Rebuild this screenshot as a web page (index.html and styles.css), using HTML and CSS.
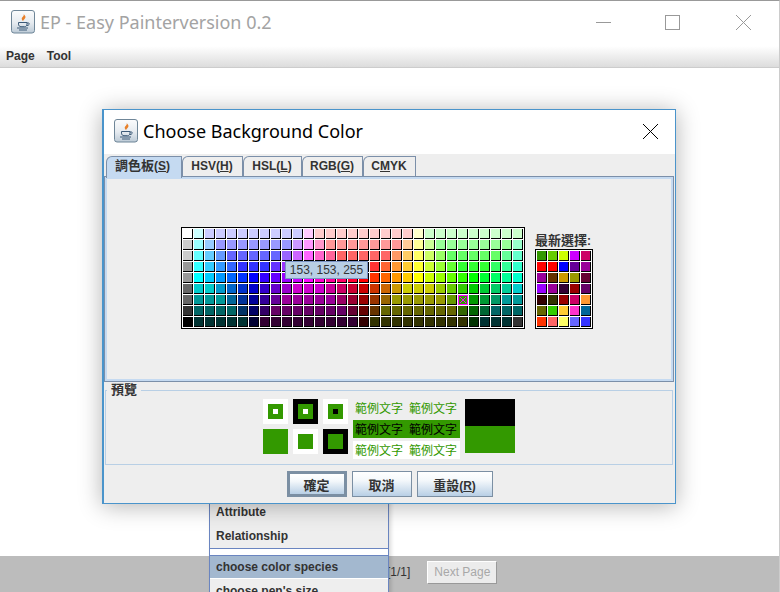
FILE: index.html
```html
<!DOCTYPE html>
<html lang="en">
<head>
    <meta charset="UTF-8">
    <title>EP - Easy Painter</title>
    <link rel="stylesheet" href="styles.css">
</head>
<body>
    <svg class="defs" width="0" height="0">
        <symbol id="javaIcon" viewBox="0 0 24 24">
            <defs>
                <linearGradient id="iconBg" x1="0" y1="0" x2="0" y2="1">
                    <stop offset="0" stop-color="#fbfcfd"/>
                    <stop offset="0.55" stop-color="#e6ebf0"/>
                    <stop offset="1" stop-color="#bccad6"/>
                </linearGradient>
            </defs>
            <rect x="0.5" y="0.5" width="23" height="22.5" rx="2.5" fill="url(#iconBg)" stroke="#6f8698"/>
            <path d="M12.5 4c1.5 2-2.6 3.2-1.6 5.6.3.7.8 1.2 1.3 1.7-.2-1.7 3.2-2.7 2-5.2-.4-.9-1-1.5-1.7-2.1z" fill="#e8802a"/>
            <path d="M7.5 12.5h8.5v1.6c0 1.6-1.2 2.6-2.4 2.6H10c-1.4 0-2.5-1-2.5-2.6z" fill="none" stroke="#3c5a78" stroke-width="1"/>
            <path d="M16 13h1.5c1.2 0 1.2 2.4-1.6 2.6M6 18h11M8 20h8" fill="none" stroke="#3c5a78" stroke-width="1"/>
        </symbol>
    </svg>

    <div class="window">
        <div class="titlebar">
            <svg class="app-icon"><use href="#javaIcon"/></svg>
            <span class="app-title">EP - Easy Painterversion 0.2</span>
            <div class="win-controls">
                <svg class="win-btn" viewBox="0 0 15 15"><path d="M0 7.5h15" stroke="#999"/></svg>
                <svg class="win-btn max" viewBox="0 0 15 15"><rect x="0.5" y="0.5" width="14" height="14" fill="none" stroke="#999"/></svg>
                <svg class="win-btn" viewBox="0 0 15 15"><path d="M0 0l15 15M15 0L0 15" stroke="#999"/></svg>
            </div>
        </div>
        <div class="menubar">
            <span>Page</span>
            <span>Tool</span>
        </div>
        <div class="canvas"></div>
        <div class="pagebar">
            <span class="page-no">[1/1]</span>
            <button class="next-page">Next Page</button>
        </div>

        <div class="popup">
            <div class="popup-item">Attribute</div>
            <div class="popup-item">Relationship</div>
            <div class="popup-sep"></div>
            <div class="popup-item active">choose color species</div>
            <div class="popup-item">choose pen's size</div>
        </div>

        <div class="dialog">
            <div class="dialog-title">
                <svg class="app-icon"><use href="#javaIcon"/></svg>
                <span class="dialog-name">Choose Background Color</span>
                <svg class="dialog-close" viewBox="0 0 15 15"><path d="M0 0l15 15M15 0L0 15" stroke="#000"/></svg>
            </div>
            <div class="tabs">
                <div class="tab selected"><span class="cjk">調色板</span>(<u>S</u>)</div>
                <div class="tab t-hsv">HSV(<u>H</u>)</div>
                <div class="tab t-hsl">HSL(<u>L</u>)</div>
                <div class="tab t-rgb">RGB(<u>G</u>)</div>
                <div class="tab t-cmyk">C<u>M</u>YK</div>
            </div>
            <div class="pane">
                <div class="pane-inner">
                    <div class="main-swatches">
                        <div id="mainGrid" class="grid main-grid"></div>
                        <div class="tooltip">153, 153, 255</div>
                    </div>
                    <div class="recent">
                        <div class="recent-label"><span class="cjk">最新選擇</span>:</div>
                        <div id="recentGrid" class="grid recent-grid"></div>
                    </div>
                </div>
            </div>
            <fieldset class="preview">
                <legend><span class="cjk">預覽</span></legend>
                <div class="preview-row">
                    <div class="squares">
                        <div class="sq bg-white"><div class="sq-mid"><div class="sq-core bg-white"></div></div></div>
                        <div class="sq bg-black"><div class="sq-mid"><div class="sq-core bg-white"></div></div></div>
                        <div class="sq bg-white"><div class="sq-mid"><div class="sq-core bg-black"></div></div></div>
                        <div class="sq bg-green"></div>
                        <div class="sq bg-white"><div class="sq-mid"></div></div>
                        <div class="sq bg-black"><div class="sq-mid"></div></div>
                    </div>
                    <div class="samples">
                        <div class="sample"><span>範例文字</span><span>範例文字</span></div>
                        <div class="sample on-green"><span>範例文字</span><span>範例文字</span></div>
                        <div class="sample on-white"><span>範例文字</span><span>範例文字</span></div>
                    </div>
                    <div class="old-new">
                        <div class="old-color"></div>
                        <div class="new-color"></div>
                    </div>
                </div>
            </fieldset>
            <div class="dialog-buttons">
                <button class="btn default"><span class="cjk">確定</span></button>
                <button class="btn"><span class="cjk">取消</span></button>
                <button class="btn wide"><span class="cjk">重設</span>(<u>R</u>)</button>
            </div>
        </div>
    </div>

    <script src="script.js"></script>
</body>
</html>
```

FILE: styles.css
```css
* {
    box-sizing: border-box;
}
body {
    margin: 0;
    background-color: white;
    font-family: "Liberation Sans", "Noto Sans CJK TC", sans-serif;
    font-size: 12px;
    color: #333;
    overflow: hidden;
}
.defs {
    position: absolute;
}
.cjk {
    font-size: 13px;
}
.window {
    position: relative;
    display: flex;
    flex-direction: column;
    height: 592px;
    border-top: 1px solid #999;
    border-right: 1px solid #ccc;
    overflow: hidden;
}
.titlebar {
    display: flex;
    align-items: center;
    height: 45px;
    padding: 0 28px 3px 11px;
    flex: none;
}
.app-icon {
    width: 24px;
    height: 24px;
    flex: none;
}
.app-title {
    margin-left: 5px;
    font-family: "Noto Sans", sans-serif;
    font-size: 18px;
    color: #a3a3a3;
}
.win-controls {
    display: flex;
    gap: 55px;
    margin-left: auto;
}
.win-btn {
    width: 15px;
    height: 15px;
}
.win-btn.max {
    margin: 0 1px 0 -1px;
}
.menubar {
    display: flex;
    gap: 12px;
    height: 22px;
    padding: 3px 6px 0;
    flex: none;
    font-weight: bold;
    line-height: 15px;
    background: linear-gradient(#fff, #fafafa 15%, #dcdcdc);
    border-bottom: 1px solid #ccc;
}
.canvas {
    flex: 1;
}
.pagebar {
    display: flex;
    align-items: center;
    gap: 17px;
    height: 36px;
    padding: 0 0 4px 387px;
    flex: none;
    background-color: #bcbcbc;
}
.next-page {
    width: 70px;
    height: 23px;
    padding: 0;
    font: 12px "Liberation Sans", sans-serif;
    color: #a8a8a8;
    background-color: #ececec;
    border: 1px solid #fff;
    border-right-color: #999;
    border-bottom-color: #999;
}

/* popup menu, mostly hidden behind the dialog */
.popup {
    position: absolute;
    left: 209px;
    top: 470px;
    width: 180px;
    height: 160px;
    padding-top: 28px;
    font-weight: bold;
    background-color: #eee;
    border: 1px solid #6a85c0;
    box-shadow: 2px 2px 4px rgba(0, 0, 0, 0.15);
}
.popup-item {
    height: 24px;
    padding: 5px 6px 0;
    line-height: 15px;
}
.popup-sep {
    height: 7px;
    background-color: white;
    border-top: 1px solid #6a85c0;
}
.popup-item.active {
    padding-top: 4px;
    background-color: #a3b8cf;
    border-top: 1px solid #6a85c0;
    border-bottom: 1px solid #fff;
}

/* color chooser dialog */
.dialog {
    position: absolute;
    left: 102px;
    top: 108px;
    width: 574px;
    height: 395px;
    background-color: #eee;
    border: 1px solid #4a94cb;
    border-left-width: 2px;
    box-shadow: 0 2px 22px rgba(0, 0, 0, 0.3);
}
.dialog-title {
    display: flex;
    align-items: center;
    height: 44px;
    padding: 0 17px 2px 10px;
    background-color: white;
}
.dialog-name {
    margin-left: 5px;
    font-family: "Noto Sans", sans-serif;
    font-size: 18px;
    color: #000;
}
.dialog-close {
    width: 15px;
    height: 15px;
    margin-left: auto;
}
.tabs {
    display: flex;
    height: 22px;
    padding: 2px 0 0 2px;
}
.tab {
    width: 61px;
    height: 20px;
    padding-right: 1px;
    line-height: 19px;
    text-align: center;
    font-weight: bold;
    border: 1px solid #7b8fa9;
    border-bottom: none;
    border-top-left-radius: 6px;
}
.tab.selected {
    position: relative;
    width: 76px;
    height: 22px;
    padding-right: 3px;
    line-height: 17px;
    background-color: #c5daf1;
}
.tab.t-hsl {
    width: 59px;
}
.tab.t-cmyk {
    width: 53px;
}
.pane {
    height: 206px;
    margin: 0 1px 0 0;
    padding: 0;
    border: 1px solid #7b8fa9;
}
.pane-inner {
    display: flex;
    align-items: flex-end;
    justify-content: center;
    gap: 10px;
    height: 100%;
    padding: 0 4px 50px 0;
    border: 2px solid #c5daf1;
}
.main-swatches {
    position: relative;
}
.grid {
    display: grid;
    gap: 1px;
    padding: 1px;
    background-color: white;
    border: 1px solid black;
}
.main-grid {
    grid-template-columns: repeat(31, 10px);
}
.recent-grid {
    grid-template-columns: repeat(5, 10px);
}
.swatch {
    position: relative;
    width: 10px;
    height: 10px;
    border-right: 1px solid black;
    border-bottom: 1px solid black;
}
.swatch.picked {
    border: none;
}
.swatch svg {
    display: block;
}
.tooltip {
    position: absolute;
    left: 104px;
    top: 34px;
    width: 83px;
    height: 18px;
    line-height: 16px;
    text-align: center;
    background-color: #b8cfe5;
    border: 1px solid #7a93c4;
}
.recent-label {
    font-weight: bold;
    line-height: 15px;
    white-space: nowrap;
}
.preview {
    height: 82px;
    margin: 1px 2px 0 1px;
    padding: 0;
    border: 1px solid #b8cfe5;
    min-width: 0;
}
.preview legend {
    margin-left: 1px;
    padding: 0 4px;
    font-weight: bold;
    line-height: 14px;
}
.preview-row {
    display: flex;
    align-items: flex-start;
    padding: 2px 0 0 157px;
}
.squares {
    display: grid;
    grid-template-columns: repeat(3, 25px);
    gap: 5px;
}
.sq {
    display: flex;
    align-items: center;
    justify-content: center;
    width: 25px;
    height: 25px;
}
.sq-mid {
    display: flex;
    align-items: center;
    justify-content: center;
    width: 15px;
    height: 15px;
    background-color: #339900;
}
.sq-core {
    width: 5px;
    height: 5px;
}
.bg-white {
    background-color: white;
}
.bg-black {
    background-color: black;
}
.bg-green {
    background-color: #339900;
}
.samples {
    display: flex;
    flex-direction: column;
    gap: 3px;
    width: 107px;
    margin-left: 5px;
}
.sample {
    display: flex;
    gap: 6px;
    height: 18px;
    padding: 0 2px;
    line-height: 21px;
    color: #339900;
}
.sample.on-green {
    color: black;
    background-color: #339900;
}
.sample.on-white {
    background-color: white;
}
.old-new {
    margin-left: 5px;
}
.old-color {
    width: 50px;
    height: 27px;
    background-color: black;
}
.new-color {
    width: 50px;
    height: 27px;
    background-color: #339900;
}
.dialog-buttons {
    display: flex;
    justify-content: center;
    gap: 5px;
    margin-top: 6px;
}
.btn {
    width: 60px;
    height: 26px;
    padding: 0;
    font: bold 12px "Liberation Sans", "Noto Sans CJK TC", sans-serif;
    color: #333;
    background: linear-gradient(#fff, #f4f8fb 35%, #b8cfe5);
    border: 1px solid #7b8fa3;
}
.btn.default {
    border-width: 3px;
}
.btn.wide {
    width: 76px;
}
```

FILE: script.js
```js
// Swatch colors, "color*n" means n cells in a row
const mainRows = [
    'ffffff ccffff ccccff*9 ffccff ffcccc*9 ffffcc ccffcc*9',
    'cccccc 99ffff 99ccff 9999ff*7 cc99ff ff99ff ff99cc ff9999*7 ffcc99 ffff99 ccff99 99ff99*7 99ffcc',
    'cccccc 66ffff 66ccff 6699ff 6666ff*5 9966ff cc66ff ff66ff ff66cc ff6699 ff6666*5 ff9966 ffcc66 ffff66 ccff66 99ff66 66ff66*5 66ff99 66ffcc',
    '999999 33ffff 33ccff 3399ff 3366ff 3333ff*3 6633ff 9933ff cc33ff ff33ff ff33cc ff3399 ff3366 ff3333*3 ff6633 ff9933 ffcc33 ffff33 ccff33 99ff33 66ff33 33ff33*3 33ff66 33ff99 33ffcc',
    '999999 00ffff 00ccff 0099ff 0066ff 0033ff 0000ff 3300ff 6600ff 9900ff cc00ff ff00ff ff00cc ff0099 ff0066 ff0033 ff0000 ff3300 ff6600 ff9900 ffcc00 ffff00 ccff00 99ff00 66ff00 33ff00 00ff00 00ff33 00ff66 00ff99 00ffcc',
    '666666 00cccc*2 0099cc 0066cc 0033cc 0000cc 3300cc 6600cc 9900cc cc00cc*3 cc0099 cc0066 cc0033 cc0000 cc3300 cc6600 cc9900 cccc00*3 99cc00 66cc00 33cc00 00cc00 00cc33 00cc66 00cc99 00cccc',
    '666666 009999*3 006699 003399 000099 330099 660099 990099*5 990066 990033 990000 993300 996600 999900*5 669900 339900 009900 009933 009966 009999*2',
    '333333 006666*4 003366 000066 330066 660066*7 660033 660000 663300 666600*7 336600 006600 006633 006666*3',
    '000000 003333*5 000033 330033*9 330000 333300*9 003300 003333*3 333333'
];

const recentRows = [
    '339900 66cc00 ccff00 cc00ff cc0066',
    'ff0000 ff0000 0000ff 660099 990099',
    '990099 663300 cc9900 999900 660033',
    '9900ff 990099 330033 990000 660066',
    '330000 333300 990000 cc0066 ff9933',
    '666600 33cc00 ffcc33 ff33cc 006699',
    'ff3300 ff6666 ffff66 6666ff 3333ff'
];

function expandRow(row) {
    const cells = [];
    row.split(' ').forEach(part => {
        const [color, count] = part.split('*');
        for (let i = 0; i < (count || 1); i++) {
            cells.push(color);
        }
    });
    return cells;
}

function fillGrid(grid, rows) {
    rows.forEach(row => {
        expandRow(row).forEach(color => {
            const cell = document.createElement('div');
            cell.className = 'swatch';
            cell.style.backgroundColor = '#' + color;
            grid.appendChild(cell);
        });
    });
}

const mainGrid = document.getElementById('mainGrid');
fillGrid(mainGrid, mainRows);
fillGrid(document.getElementById('recentGrid'), recentRows);

// Currently selected color gets a magenta mark
const picked = mainGrid.children[6 * 31 + 25];
picked.classList.add('picked');
picked.innerHTML = '<svg width="10" height="10" viewBox="0 0 10 10"><rect x="0.5" y="0.5" width="9" height="9" fill="none" stroke="#f0f"/><path d="M2 2l6 6M8 2l-6 6" stroke="#f0f"/></svg>';
```
